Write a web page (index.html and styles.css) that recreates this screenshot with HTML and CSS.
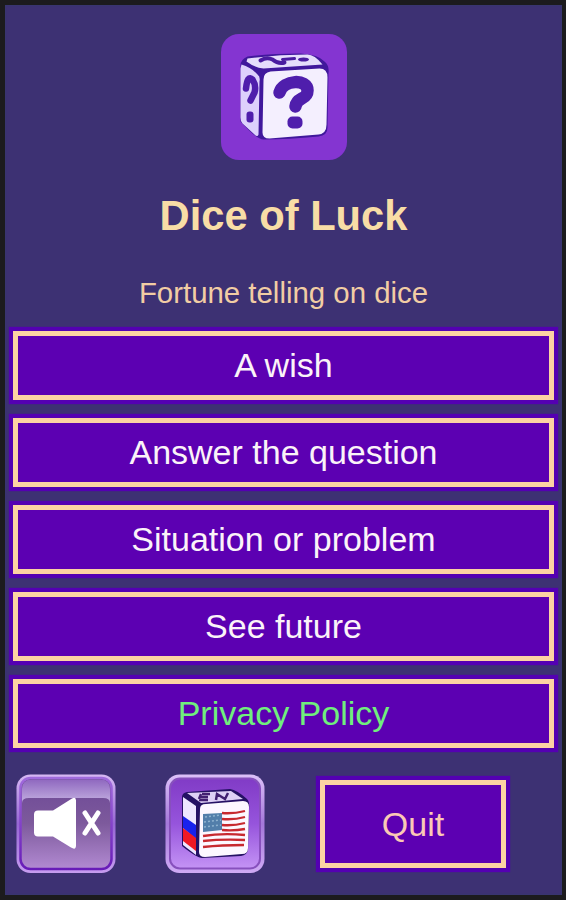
FILE: index.html
```html
<!DOCTYPE html>
<html lang="en">
<head>
<meta charset="utf-8">
<title>Dice of Luck</title>
<link rel="stylesheet" href="styles.css">
</head>
<body>
<main class="screen">
  <svg class="logo" viewBox="0 0 126 126" aria-hidden="true">
    <rect width="126" height="126" rx="18" fill="#8435d1"/>
    <g transform="translate(-.5 2.500)">
      <path d="M20 29Q20 23 27 20Q50 17 80 17Q98 18 104 25Q109 29 108 37L107 91Q107 99 98 100Q68 103 43 103Q36 103 20 85Z" fill="#40189c"/>
      <path d="M27 22Q57 18 87 18Q94 18 102 28L43 32Q34 31 26 25Z" fill="#e5ddfb"/>
      <path d="M40 24Q46 20 52 23Q58 28 64 26" fill="none" stroke="#4a1ca0" stroke-width="4" stroke-linecap="round"/>
      <path d="M62 23L74 22" fill="none" stroke="#4a1ca0" stroke-width="3" stroke-linecap="round"/>
      <ellipse cx="83" cy="23" rx="5.500" ry="2" fill="#4a1ca0"/>
      <path d="M21 28Q31 31 37 38Q40 40 39 45L38 98Q37 101 34 98L22 87Q20 85 20 81L20 32Z" fill="#ddd0fc"/>
      <path d="M43 43Q43 36 50 35L99 32Q107 32 107 41L106 88Q106 97 98 98L49 102Q42 102 42 96Z" fill="#f4effe"/>
      <path d="M59 56C63 43 87 42 87 54C87 64 76 60 75 70" fill="none" stroke="#4f1eac" stroke-width="12.500" stroke-linecap="round"/>
      <rect x="67" y="80" width="15" height="12" rx="5" fill="#4f1eac"/>
      <path d="M25.500 52Q27 38 32 43Q36 49 34 56Q32 60 30 64" fill="none" stroke="#4f1eac" stroke-width="6.500" stroke-linecap="round"/>
      <rect x="26" y="75" width="7" height="11" rx="3" fill="#4f1eac"/>
    </g>
  </svg>
  <h1 class="title">Dice of Luck</h1>
  <p class="subtitle">Fortune telling on dice</p>
  <nav class="menu">
    <button class="btn">A wish</button>
    <button class="btn">Answer the question</button>
    <button class="btn">Situation or problem</button>
    <button class="btn">See future</button>
    <button class="btn btn-policy">Privacy Policy</button>
  </nav>
  <div class="footer">
    <button class="icon-btn" aria-label="Sound off">
      <svg viewBox="0 0 100 100">
        <defs>
          <linearGradient id="rim" x2="0" y2="1"><stop stop-color="#d6b8f3"/><stop offset=".5" stop-color="#9666d4"/><stop offset="1" stop-color="#c69cf0"/></linearGradient>
          <linearGradient id="body" x2="0" y2="1"><stop stop-color="#6c4796"/><stop offset=".5" stop-color="#7d5a9c"/><stop offset="1" stop-color="#b28ad2"/></linearGradient>
          <linearGradient id="gloss" x2="0" y2="1"><stop stop-color="#8f68bf"/><stop offset="1" stop-color="#c3afe1"/></linearGradient>
          <linearGradient id="edge" x2="0" y2="1"><stop stop-color="#a06bdc"/><stop offset="1" stop-color="#671bb7"/></linearGradient>
        </defs>
        <rect x=".5" y=".5" width="99" height="98.500" rx="14" fill="url(#rim)"/>
        <rect x="4.500" y="4" width="91" height="91" rx="10" fill="url(#body)" stroke="url(#edge)" stroke-width="2.500"/>
        <path d="M6 29V15Q6 5.500 16 5.500H84Q94 5.500 94 15V29Q94 24 87 24H13Q6 24 6 29Z" fill="url(#gloss)"/>
        <path d="M22 36H37L56 24Q60 22 60 26V71Q60 76 55 73L37 62H22Q18 62 18 58V40Q18 36 22 36Z" fill="#fff" transform="translate(0 .5)"/>
        <path d="M69 39L82 59M82 39L69 59" stroke="#fff" stroke-width="5" stroke-linecap="round"/>
      </svg>
    </button>
    <button class="icon-btn" aria-label="Language">
      <svg viewBox="0 0 100 100">
        <defs>
          <linearGradient id="lang" x2="0" y2="1"><stop stop-color="#813bc6"/><stop offset=".5" stop-color="#9654dc"/><stop offset="1" stop-color="#c493f5"/></linearGradient>
          <linearGradient id="langRim" x2="0" y2="1"><stop stop-color="#dcc1f9"/><stop offset=".5" stop-color="#a477da"/><stop offset="1" stop-color="#cfaaf5"/></linearGradient>
        </defs>
        <rect x=".5" y=".5" width="99" height="98.500" rx="14" fill="url(#langRim)"/>
        <rect x="5" y="4.500" width="90" height="90" rx="10" fill="url(#lang)" stroke="#8750bd" stroke-width="2"/>
        <g transform="translate(0 1)">
          <path d="M17 22Q17 18 22 17L65 14Q72 15 82 24Q85 27 84 35L83 75Q82 80 76 81L37 83Q32 83 17 71Z" fill="#251164"/>
          <path d="M22 18L66 16L78 24L36 28Z" fill="#ded0f5"/>
          <path d="M36 19L34 24M37 19H45M36 22H43M34 25H43M51 25L52 19L60 24L63 18" fill="none" stroke="#422071" stroke-width="2.500"/>
          <path d="M18 22L31 31V80L18 70Z" fill="#eee6ff"/>
          <path d="M18 41L31 50V64L18 53Z" fill="#1821ed"/>
          <path d="M18 53L31 63V76L18 66Z" fill="#f01924"/>
          <path d="M35 34Q35 29 41 29L78 26Q84 26 84 32L83 73Q83 79 77 79L40 82Q34 82 34 77Z" fill="#fcf7ff"/>
          <path d="M57 38Q68 39 80 36M57 44Q69 45 80 42M57 50Q68 51 80 48M57 55Q69 56 80 54M38 61Q57 58 80 60M38 66Q57 64 80 65M38 72Q57 70 79 70" fill="none" stroke="#c7282f" stroke-width="2.300"/>
          <path d="M38 39L57 38V55L38 57Z" fill="#527eaa"/>
          <path d="M40 42L56 40M39 47L56 45M39 52L56 50" stroke="#8eb2cf" stroke-width="1.500" stroke-dasharray="2 2"/>
        </g>
      </svg>
    </button>
    <button class="btn btn-quit">Quit</button>
  </div>
</main>
</body>
</html>
```
FILE: styles.css
```css
* { box-sizing: border-box; }

body {
  margin: 0;
  height: 900px;
  padding: 5px 4px 5px 5px;
  background: #1c1b1e;
  font-family: "Liberation Sans", Arial, sans-serif;
}

.screen {
  height: 890px;
  padding: 29px 8px 0;
  display: flex;
  flex-direction: column;
  align-items: center;
  background: #3d3173;
  box-shadow: inset 0 0 2px #30416c;
}

.logo {
  width: 126px;
  height: 126px;
  flex: none;
}

.title {
  margin: 31px 0 0;
  font-size: 41.7px;
  line-height: 50px;
  color: #f8dda6;
}

.subtitle {
  margin: 35px 0 0;
  font-size: 29.4px;
  line-height: 34px;
  color: #f2cda4;
}

.menu {
  width: 100%;
  margin-top: 21px;
  display: grid;
  gap: 18px;
}

.btn {
  height: 69px;
  padding: 0;
  border: 5px solid #fcd3a3;
  background: #5c00b2;
  box-shadow: 0 0 1px 4px #5400b2;
  font: 34px "Liberation Sans", Arial, sans-serif;
  color: #fbf3f8;
}

.btn-policy { color: #70ef7c; }

.footer {
  width: 100%;
  margin-top: 25px;
  padding-left: 3px;
  display: flex;
  align-items: flex-start;
}

.icon-btn {
  width: 100px;
  height: 100px;
  margin: 1px 49px 0 0;
  padding: 0;
  border: 0;
  background: none;
}

.icon-btn svg { display: block; }

.btn-quit {
  width: 186px;
  height: 88px;
  margin: 7px 0 0 6px;
  padding-top: 1px;
  color: #fbc9b5;
}
```
